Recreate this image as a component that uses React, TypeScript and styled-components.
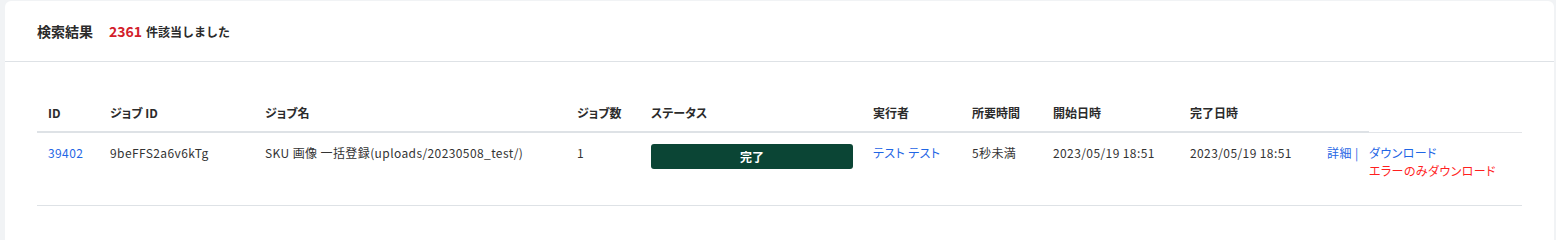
import React from 'react';
import styled, { createGlobalStyle } from 'styled-components';

const GlobalStyle = createGlobalStyle`
body {
  margin: 0;
  background-color: #f1f3f5;
  font-family: "Noto Sans CJK JP", "Noto Sans", sans-serif;
  color: #333;
}
`;

const Page = styled.div`
padding: 1px 2px 0 5px;
`;

const Card = styled.div`
background-color: #fff;
border-radius: 6px 6px 0 0;
min-height: 260px;
`;

const CardHeader = styled.div`
display: flex;
align-items: center;
height: 60px;
padding: 0 32px;
border-bottom: 1px solid #dee2e6;
`;

const Title = styled.span`
font-size: 14px;
font-weight: 700;
color: #2b2b2b;
margin-right: 16px;
`;

const Count = styled.span`
font-size: 14px;
font-weight: 700;
color: #d3202a;
margin-right: 4px;
`;

const CountText = styled.span`
font-size: 12px;
font-weight: 700;
color: #2b2b2b;
`;

const CardBody = styled.div`
padding: 30px 32px 0;
`;

const Table = styled.table`
width: 1485px;
table-layout: fixed;
border-collapse: separate;
border-spacing: 0;
font-size: 12px;
line-height: 18px;
font-feature-settings: "palt";
`;

const Th = styled.th<{ $thin?: boolean }>`
text-align: left;
font-weight: 700;
color: #2b2b2b;
padding: 12px 11px 9px;
border-bottom: ${p => (p.$thin ? '1px solid #e3e5e8' : '2px solid #dee2e6')};
white-space: nowrap;
`;

const Td = styled.td<{ $flush?: boolean; $tight?: boolean }>`
vertical-align: top;
padding: 11px ${p => (p.$flush ? '0' : p.$tight ? '9px 11px 11px' : '11px')};
padding-top: 11px;
height: 50px;
border-bottom: 1px solid #dee2e6;
white-space: nowrap;
color: #333;
letter-spacing: 0.4px;
`;

const Link = styled.a<{ $danger?: boolean }>`
display: block;
color: ${p => (p.$danger ? '#ff1f1f' : '#1f66e5')};
text-decoration: none;
`;

const InlineLink = styled.a`
color: #1f66e5;
text-decoration: none;
`;

const Badge = styled.div`
height: 25px;
line-height: 25px;
background-color: #0b4535;
color: #fff;
font-weight: 700;
text-align: center;
border-radius: 3px;
letter-spacing: 0;
`;

const widths = [62, 155, 312, 74, 222, 99, 81, 137, 137, 53, 153];
const headers = ['ID', 'ジョブ ID', 'ジョブ名', 'ジョブ数', 'ステータス', '実行者', '所要時間', '開始日時', '完了日時', '', ''];

const App = () => {
  return (
    <Page>
      <GlobalStyle />
      <Card>
        <CardHeader>
          <Title>検索結果</Title>
          <Count>2361</Count>
          <CountText>件該当しました</CountText>
        </CardHeader>
        <CardBody>
          <Table>
            <colgroup>
              {widths.map((w, i) => (
                <col key={i} style={{ width: w }} />
              ))}
            </colgroup>
            <thead>
              <tr>
                {headers.map((h, i) => (
                  <Th key={i} $thin={i === headers.length - 1}>{h}</Th>
                ))}
              </tr>
            </thead>
            <tbody>
              <tr>
                <Td><InlineLink href="#">39402</InlineLink></Td>
                <Td>9beFFS2a6v6kTg</Td>
                <Td>SKU 画像 一括登録(uploads/20230508_test/)</Td>
                <Td>1</Td>
                <Td $tight><Badge>完了</Badge></Td>
                <Td><InlineLink href="#">テスト テスト</InlineLink></Td>
                <Td>5秒未満</Td>
                <Td>2023/05/19 18:51</Td>
                <Td>2023/05/19 18:51</Td>
                <Td><InlineLink href="#">詳細 |</InlineLink></Td>
                <Td $flush>
                  <Link href="#">ダウンロード</Link>
                  <Link href="#" $danger>エラーのみダウンロード</Link>
                </Td>
              </tr>
            </tbody>
          </Table>
        </CardBody>
      </Card>
    </Page>
  );
};

export default App;
